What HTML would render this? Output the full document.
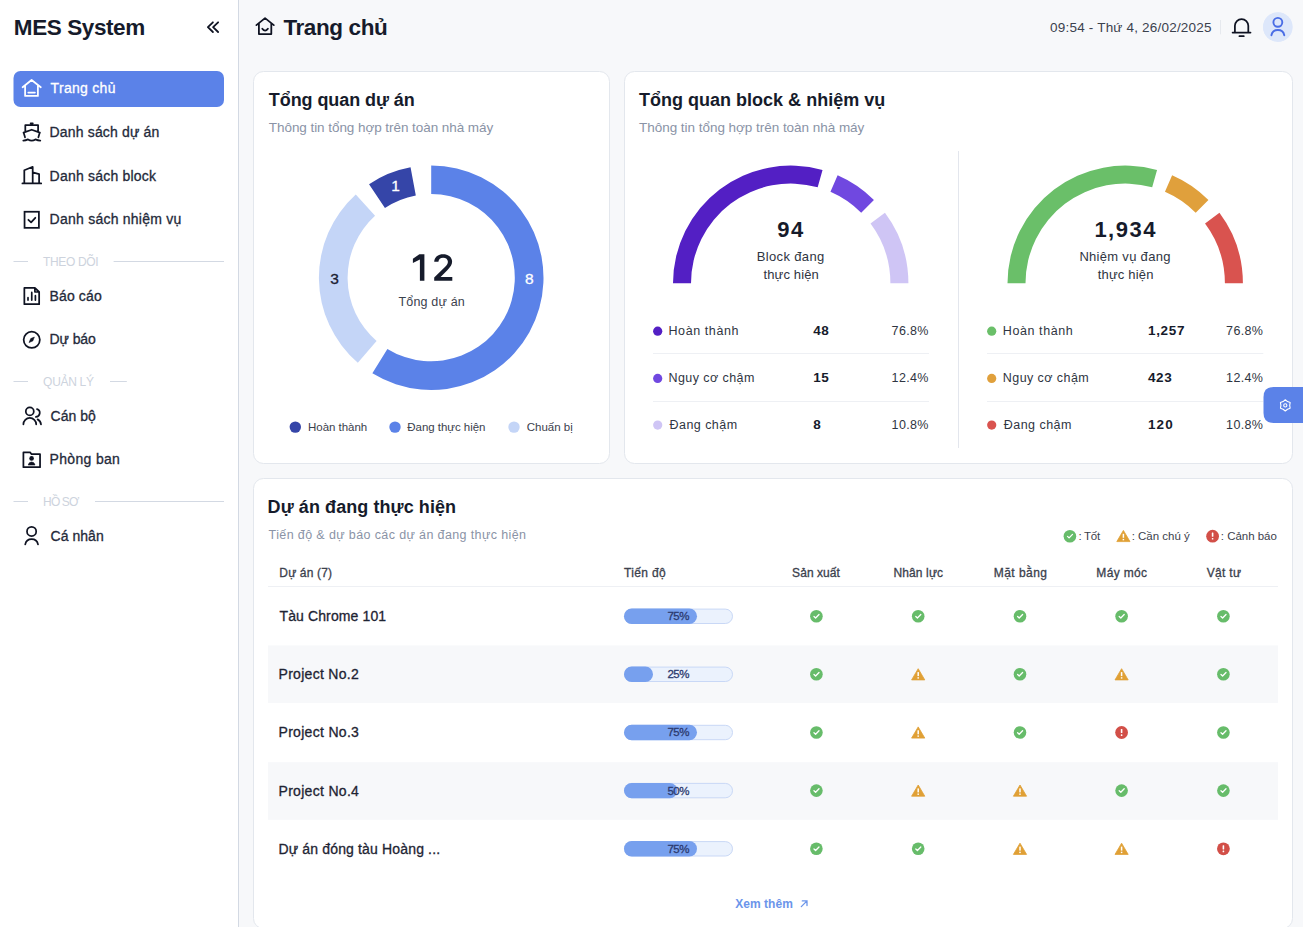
<!DOCTYPE html>
<html><head><meta charset="utf-8"><title>MES System</title>
<style>
html,body{margin:0;padding:0;}
body{width:1303px;height:927px;overflow:hidden;background:#f7f8fa;position:relative;font-family:"Liberation Sans",sans-serif;}
svg{position:absolute;left:0;top:0;}
.t{position:absolute;white-space:nowrap;}
</style></head><body>
<svg width="1303" height="927" viewBox="0 0 1303 927">
<rect x="0" y="0" width="238" height="927" fill="#ffffff"/>
<rect x="238" y="0" width="1" height="927" fill="#d3d9e3"/>
<rect x="13.5" y="71" width="210.5" height="36" rx="7" fill="#5b82e8"/>
<rect x="13.5" y="261.0" width="14.5" height="1" fill="#d3d9e3"/>
<rect x="113.6" y="261.0" width="110.4" height="1" fill="#d3d9e3"/>
<rect x="13.5" y="381.0" width="14.5" height="1" fill="#d3d9e3"/>
<rect x="110" y="381.0" width="16.799999999999997" height="1" fill="#d3d9e3"/>
<rect x="13.5" y="501.0" width="14.5" height="1" fill="#d3d9e3"/>
<rect x="95" y="501.0" width="129" height="1" fill="#d3d9e3"/>
<rect x="253.5" y="71.5" width="356" height="392" rx="10" fill="#ffffff" stroke="#e3e7ed" stroke-width="1"/>
<rect x="624.5" y="71.5" width="668" height="392" rx="10" fill="#ffffff" stroke="#e3e7ed" stroke-width="1"/>
<rect x="253.5" y="478.5" width="1039" height="450" rx="10" fill="#ffffff" stroke="#e3e7ed" stroke-width="1"/>
<path d="M431.20,165.40 A112.3,112.3 0 1 1 372.36,373.35 L387.39,348.90 A83.6,83.6 0 1 0 431.20,194.10 Z" fill="#5b82e8"/>
<path d="M357.82,362.71 A112.3,112.3 0 0 1 355.77,194.51 L375.04,215.77 A83.6,83.6 0 0 0 376.57,340.98 Z" fill="#c4d5f7"/>
<path d="M369.05,184.16 A112.3,112.3 0 0 1 410.54,167.32 L415.82,195.53 A83.6,83.6 0 0 0 384.94,208.07 Z" fill="#3545a8"/>
<path d="M673.00,283.30 A117.7,117.7 0 0 1 822.55,169.99 L817.68,187.32 A99.7,99.7 0 0 0 691.00,283.30 Z" fill="#531fc4"/>
<path d="M837.63,175.36 A117.7,117.7 0 0 1 873.93,200.07 L861.20,212.80 A99.7,99.7 0 0 0 830.46,191.87 Z" fill="#7048e0"/>
<path d="M884.95,212.79 A117.7,117.7 0 0 1 908.40,283.30 L890.40,283.30 A99.7,99.7 0 0 0 870.53,223.58 Z" fill="#cfc5f5"/>
<path d="M1007.50,283.30 A117.7,117.7 0 0 1 1157.05,169.99 L1152.18,187.32 A99.7,99.7 0 0 0 1025.50,283.30 Z" fill="#6abf69"/>
<path d="M1172.13,175.36 A117.7,117.7 0 0 1 1208.43,200.07 L1195.70,212.80 A99.7,99.7 0 0 0 1164.96,191.87 Z" fill="#e0a03c"/>
<path d="M1219.45,212.79 A117.7,117.7 0 0 1 1242.90,283.30 L1224.90,283.30 A99.7,99.7 0 0 0 1205.03,223.58 Z" fill="#d9534f"/>
<circle cx="295.3" cy="427.1" r="5.7" fill="#3545a8"/>
<circle cx="395" cy="427.1" r="5.7" fill="#5b82e8"/>
<circle cx="514" cy="427.1" r="5.7" fill="#c4d5f7"/>
<circle cx="657.7" cy="331.2" r="4.6" fill="#531fc4"/>
<circle cx="991.7" cy="331.2" r="4.6" fill="#6abf69"/>
<circle cx="657.7" cy="378.4" r="4.6" fill="#7048e0"/>
<circle cx="991.7" cy="378.4" r="4.6" fill="#e0a03c"/>
<circle cx="657.7" cy="425.1" r="4.6" fill="#cfc5f5"/>
<circle cx="991.7" cy="425.1" r="4.6" fill="#d9534f"/>
<rect x="653" y="353.0" width="276" height="1" fill="#eef0f4"/>
<rect x="987" y="353.0" width="276.3" height="1" fill="#eef0f4"/>
<rect x="653" y="401.0" width="276" height="1" fill="#eef0f4"/>
<rect x="987" y="401.0" width="276.3" height="1" fill="#eef0f4"/>
<rect x="958" y="151" width="1" height="297" fill="#e3e6ed"/>
<rect x="268" y="586" width="1010" height="1" fill="#eef0f4"/>
<rect x="268" y="645.4" width="1010" height="57.7" fill="#f7f8fa"/>
<rect x="268" y="762.2" width="1010" height="57.6" fill="#f7f8fa"/>
<rect x="624.5" y="609.0999999999999" width="108" height="14.4" rx="7.2" fill="#ebf2fd" stroke="#c9d8f6" stroke-width="1"/>
<rect x="624" y="608.5999999999999" width="73" height="15.4" rx="7.7" fill="#77a0ee"/>
<rect x="624.5" y="667.0999999999999" width="108" height="14.4" rx="7.2" fill="#ebf2fd" stroke="#c9d8f6" stroke-width="1"/>
<rect x="624" y="666.5999999999999" width="29" height="15.4" rx="7.7" fill="#77a0ee"/>
<rect x="624.5" y="725.3" width="108" height="14.4" rx="7.2" fill="#ebf2fd" stroke="#c9d8f6" stroke-width="1"/>
<rect x="624" y="724.8" width="73" height="15.4" rx="7.7" fill="#77a0ee"/>
<rect x="624.5" y="783.4" width="108" height="14.4" rx="7.2" fill="#ebf2fd" stroke="#c9d8f6" stroke-width="1"/>
<rect x="624" y="782.9" width="53.4" height="15.4" rx="7.7" fill="#77a0ee"/>
<rect x="624.5" y="841.5999999999999" width="108" height="14.4" rx="7.2" fill="#ebf2fd" stroke="#c9d8f6" stroke-width="1"/>
<rect x="624" y="841.0999999999999" width="73" height="15.4" rx="7.7" fill="#77a0ee"/>
<circle cx="816.4" cy="616.3" r="6.3" fill="#67bc6a"/><path d="M814.0,616.5 L815.6,618.0 L819.0,614.5" fill="none" stroke="#fff" stroke-width="1.3" stroke-linecap="round" stroke-linejoin="round"/>
<circle cx="918.2" cy="616.3" r="6.3" fill="#67bc6a"/><path d="M915.8000000000001,616.5 L917.4000000000001,618.0 L920.8000000000001,614.5" fill="none" stroke="#fff" stroke-width="1.3" stroke-linecap="round" stroke-linejoin="round"/>
<circle cx="1020" cy="616.3" r="6.3" fill="#67bc6a"/><path d="M1017.6,616.5 L1019.2,618.0 L1022.6,614.5" fill="none" stroke="#fff" stroke-width="1.3" stroke-linecap="round" stroke-linejoin="round"/>
<circle cx="1121.6" cy="616.3" r="6.3" fill="#67bc6a"/><path d="M1119.1999999999998,616.5 L1120.8,618.0 L1124.1999999999998,614.5" fill="none" stroke="#fff" stroke-width="1.3" stroke-linecap="round" stroke-linejoin="round"/>
<circle cx="1223.4" cy="616.3" r="6.3" fill="#67bc6a"/><path d="M1221.0,616.5 L1222.6000000000001,618.0 L1226.0,614.5" fill="none" stroke="#fff" stroke-width="1.3" stroke-linecap="round" stroke-linejoin="round"/>
<circle cx="816.4" cy="674.3" r="6.3" fill="#67bc6a"/><path d="M814.0,674.5 L815.6,676.0 L819.0,672.5" fill="none" stroke="#fff" stroke-width="1.3" stroke-linecap="round" stroke-linejoin="round"/>
<path d="M918.2,668.6999999999999 L924.8000000000001,679.9 L911.6,679.9 Z" fill="#e0a035" stroke="#e0a035" stroke-width="0.8" stroke-linejoin="round"/><rect x="917.45" y="672.0999999999999" width="1.5" height="4" fill="#fff"/><rect x="917.45" y="677.1999999999999" width="1.5" height="1.4" fill="#fff"/>
<circle cx="1020" cy="674.3" r="6.3" fill="#67bc6a"/><path d="M1017.6,674.5 L1019.2,676.0 L1022.6,672.5" fill="none" stroke="#fff" stroke-width="1.3" stroke-linecap="round" stroke-linejoin="round"/>
<path d="M1121.6,668.6999999999999 L1128.1999999999998,679.9 L1115.0,679.9 Z" fill="#e0a035" stroke="#e0a035" stroke-width="0.8" stroke-linejoin="round"/><rect x="1120.85" y="672.0999999999999" width="1.5" height="4" fill="#fff"/><rect x="1120.85" y="677.1999999999999" width="1.5" height="1.4" fill="#fff"/>
<circle cx="1223.4" cy="674.3" r="6.3" fill="#67bc6a"/><path d="M1221.0,674.5 L1222.6000000000001,676.0 L1226.0,672.5" fill="none" stroke="#fff" stroke-width="1.3" stroke-linecap="round" stroke-linejoin="round"/>
<circle cx="816.4" cy="732.5" r="6.3" fill="#67bc6a"/><path d="M814.0,732.7 L815.6,734.2 L819.0,730.7" fill="none" stroke="#fff" stroke-width="1.3" stroke-linecap="round" stroke-linejoin="round"/>
<path d="M918.2,726.9 L924.8000000000001,738.1 L911.6,738.1 Z" fill="#e0a035" stroke="#e0a035" stroke-width="0.8" stroke-linejoin="round"/><rect x="917.45" y="730.3" width="1.5" height="4" fill="#fff"/><rect x="917.45" y="735.4" width="1.5" height="1.4" fill="#fff"/>
<circle cx="1020" cy="732.5" r="6.3" fill="#67bc6a"/><path d="M1017.6,732.7 L1019.2,734.2 L1022.6,730.7" fill="none" stroke="#fff" stroke-width="1.3" stroke-linecap="round" stroke-linejoin="round"/>
<circle cx="1121.6" cy="732.5" r="6.4" fill="#d24f48"/><rect x="1120.8" y="728.9" width="1.6" height="4.2" rx="0.5" fill="#fff"/><rect x="1120.8" y="734.3" width="1.6" height="1.6" rx="0.5" fill="#fff"/>
<circle cx="1223.4" cy="732.5" r="6.3" fill="#67bc6a"/><path d="M1221.0,732.7 L1222.6000000000001,734.2 L1226.0,730.7" fill="none" stroke="#fff" stroke-width="1.3" stroke-linecap="round" stroke-linejoin="round"/>
<circle cx="816.4" cy="790.6" r="6.3" fill="#67bc6a"/><path d="M814.0,790.8000000000001 L815.6,792.3000000000001 L819.0,788.8000000000001" fill="none" stroke="#fff" stroke-width="1.3" stroke-linecap="round" stroke-linejoin="round"/>
<path d="M918.2,785.0 L924.8000000000001,796.2 L911.6,796.2 Z" fill="#e0a035" stroke="#e0a035" stroke-width="0.8" stroke-linejoin="round"/><rect x="917.45" y="788.4" width="1.5" height="4" fill="#fff"/><rect x="917.45" y="793.5" width="1.5" height="1.4" fill="#fff"/>
<path d="M1020,785.0 L1026.6,796.2 L1013.4,796.2 Z" fill="#e0a035" stroke="#e0a035" stroke-width="0.8" stroke-linejoin="round"/><rect x="1019.25" y="788.4" width="1.5" height="4" fill="#fff"/><rect x="1019.25" y="793.5" width="1.5" height="1.4" fill="#fff"/>
<circle cx="1121.6" cy="790.6" r="6.3" fill="#67bc6a"/><path d="M1119.1999999999998,790.8000000000001 L1120.8,792.3000000000001 L1124.1999999999998,788.8000000000001" fill="none" stroke="#fff" stroke-width="1.3" stroke-linecap="round" stroke-linejoin="round"/>
<circle cx="1223.4" cy="790.6" r="6.3" fill="#67bc6a"/><path d="M1221.0,790.8000000000001 L1222.6000000000001,792.3000000000001 L1226.0,788.8000000000001" fill="none" stroke="#fff" stroke-width="1.3" stroke-linecap="round" stroke-linejoin="round"/>
<circle cx="816.4" cy="848.8" r="6.3" fill="#67bc6a"/><path d="M814.0,849.0 L815.6,850.5 L819.0,847.0" fill="none" stroke="#fff" stroke-width="1.3" stroke-linecap="round" stroke-linejoin="round"/>
<circle cx="918.2" cy="848.8" r="6.3" fill="#67bc6a"/><path d="M915.8000000000001,849.0 L917.4000000000001,850.5 L920.8000000000001,847.0" fill="none" stroke="#fff" stroke-width="1.3" stroke-linecap="round" stroke-linejoin="round"/>
<path d="M1020,843.1999999999999 L1026.6,854.4 L1013.4,854.4 Z" fill="#e0a035" stroke="#e0a035" stroke-width="0.8" stroke-linejoin="round"/><rect x="1019.25" y="846.5999999999999" width="1.5" height="4" fill="#fff"/><rect x="1019.25" y="851.6999999999999" width="1.5" height="1.4" fill="#fff"/>
<path d="M1121.6,843.1999999999999 L1128.1999999999998,854.4 L1115.0,854.4 Z" fill="#e0a035" stroke="#e0a035" stroke-width="0.8" stroke-linejoin="round"/><rect x="1120.85" y="846.5999999999999" width="1.5" height="4" fill="#fff"/><rect x="1120.85" y="851.6999999999999" width="1.5" height="1.4" fill="#fff"/>
<circle cx="1223.4" cy="848.8" r="6.4" fill="#d24f48"/><rect x="1222.6000000000001" y="845.1999999999999" width="1.6" height="4.2" rx="0.5" fill="#fff"/><rect x="1222.6000000000001" y="850.5999999999999" width="1.6" height="1.6" rx="0.5" fill="#fff"/>
<circle cx="1069.9" cy="536.2" r="6.3" fill="#67bc6a"/><path d="M1067.5,536.4000000000001 L1069.1000000000001,537.9000000000001 L1072.5,534.4000000000001" fill="none" stroke="#fff" stroke-width="1.3" stroke-linecap="round" stroke-linejoin="round"/>
<path d="M1123.4,530.4 L1130.0,541.6 L1116.8000000000002,541.6 Z" fill="#e0a035" stroke="#e0a035" stroke-width="0.8" stroke-linejoin="round"/><rect x="1122.65" y="533.8" width="1.5" height="4" fill="#fff"/><rect x="1122.65" y="538.9" width="1.5" height="1.4" fill="#fff"/>
<circle cx="1212.6" cy="536.2" r="6.4" fill="#d24f48"/><rect x="1211.8" y="532.6" width="1.6" height="4.2" rx="0.5" fill="#fff"/><rect x="1211.8" y="538.0" width="1.6" height="1.6" rx="0.5" fill="#fff"/>
<path d="M1303,387 L1273.5,387 Q1263.5,387 1263.5,397 L1263.5,413 Q1263.5,423 1273.5,423 L1303,423 Z" fill="#5b82e8"/>
<polygon points="1285.30,399.80 1287.50,401.59 1290.15,402.60 1289.70,405.40 1290.15,408.20 1287.50,409.21 1285.30,411.00 1283.10,409.21 1280.45,408.20 1280.90,405.40 1280.45,402.60 1283.10,401.59" fill="none" stroke="#fff" stroke-width="1.1" stroke-linejoin="round"/>
<circle cx="1285.3" cy="405.4" r="1.6" fill="none" stroke="#fff" stroke-width="1.1"/>
<circle cx="1277.7" cy="27.1" r="14.6" fill="#dde6fb"/>
<circle cx="1277.7" cy="22.8" r="3.6" fill="none" stroke="#4a6fe0" stroke-width="1.6"/>
<path d="M1270.4,35.2 Q1271.2,28.6 1277.7,28.6 Q1284.2,28.6 1285,35.2" fill="none" stroke="#4a6fe0" stroke-width="1.6" stroke-linecap="round"/>
<rect x="1220" y="20" width="1" height="14.3" fill="#e6e9ee"/>
<path d="M1232.6,32.6 L1250.5,32.6 M1234.9,32.6 L1234.9,25.8 A6.7,6.7 0 0 1 1248.3,25.8 L1248.3,32.6" fill="none" stroke="#0f1322" stroke-width="1.75" stroke-linecap="round" stroke-linejoin="round" />
<path d="M1239.4,36.2 L1243.8,36.2" fill="none" stroke="#0f1322" stroke-width="1.7" stroke-linecap="round" stroke-linejoin="round" stroke-linecap="butt"/>
<circle cx="1277.85" cy="27.05" r="14.75" fill="#dde7fa"/>
<circle cx="1277.85" cy="22.36" r="4.45" fill="none" stroke="#4a6de5" stroke-width="1.9"/>
<path d="M1271.4,35.2 A6.6,6.6 0 0 1 1284.3,35.2" fill="none" stroke="#4a6de5" stroke-width="1.9" stroke-linecap="round" stroke-linejoin="round" />
<path d="M212.9,22.3 L207.9,27.15 L212.9,32 M218.1,22.3 L213.1,27.15 L218.1,32" fill="none" stroke="#0f1322" stroke-width="1.8" stroke-linecap="round" stroke-linejoin="round" stroke-linecap="square"/>
<path d="M256.4,25.1 L265.05,18.1 L273.8,25.1 M258.9,23.3 L258.9,34.1 L271.3,34.1 L271.3,23.3 M262.3,28.7 Q265.1,32.4 267.9,28.7" fill="none" stroke="#0f1322" stroke-width="1.8" stroke-linecap="round" stroke-linejoin="round" />
<path d="M22.6,87.2 L31.6,80.0 L40.8,87.2 M25.1,85.5 L25.1,95.9 L37.9,95.9 L37.9,85.5 M28.3,92.6 L34.9,92.6" fill="none" stroke="#ffffff" stroke-width="1.75" stroke-linecap="round" stroke-linejoin="round" />
<path d="M30.6,123.3 L32.8,123.3 M25.3,131.3 L25.3,125.0 L38.1,125.0 L38.1,131.3 M23.5,132.6 L31.7,129.7 L39.9,132.6 M23.7,132.8 L25.0,137.3 M39.7,132.8 L38.4,137.3 M23.3,140.6 Q25.6,140.6 28.0,139.4 Q31.7,141.9 35.4,139.4 Q37.9,140.6 40.3,140.6" fill="none" stroke="#0f1322" stroke-width="1.75" stroke-linecap="round" stroke-linejoin="round" />
<path d="M22.4,183.45 L41.2,183.45 M24.3,183.45 L24.3,170.2 L32.7,166.8 L32.7,183.45 M32.7,172.3 L39.1,174.1 L39.1,183.45" fill="none" stroke="#0f1322" stroke-width="1.75" stroke-linecap="round" stroke-linejoin="round" />
<rect x="24.55" y="211.75" width="14.35" height="16.1" fill="none" stroke="#0f1322" stroke-width="1.75"/>
<path d="M28.4,219.8 L31.1,222.3 L35.3,217.8" fill="none" stroke="#0f1322" stroke-width="1.75" stroke-linecap="round" stroke-linejoin="round" />
<path d="M24.35,287.9 L34.9,287.9 L39.15,292.0 L39.15,304.2 L24.35,304.2 Z M34.9,287.9 L34.9,291.8 L39.15,292.0" fill="none" stroke="#0f1322" stroke-width="1.75" stroke-linecap="round" stroke-linejoin="round" />
<path d="M28.0,297.7 L28.0,300.1 M31.75,292.4 L31.75,300.1 M35.4,295.7 L35.4,300.1" fill="none" stroke="#0f1322" stroke-width="1.7" stroke-linecap="round" stroke-linejoin="round" />
<circle cx="31.75" cy="339.8" r="8.1" fill="none" stroke="#0f1322" stroke-width="1.75"/>
<path d="M34.4,337.0 L32.8,341.0 L29.0,342.6 L30.7,338.6 Z" fill="#0f1322" stroke="#0f1322" stroke-width="0.5" stroke-linejoin="round"/>
<circle cx="29.8" cy="411.4" r="4.0" fill="none" stroke="#0f1322" stroke-width="1.75"/>
<path d="M23.4,424.3 A6.4,6.4 0 0 1 36.2,424.3 M37.0,409.1 A4.0,4.0 0 0 1 35.9,416.9 M37.6,419.4 A6.4,6.4 0 0 1 41.0,424.3" fill="none" stroke="#0f1322" stroke-width="1.75" stroke-linecap="round" stroke-linejoin="round" />
<path d="M23.4,452.4 L30.1,452.4 L31.6,454.2 L40.05,454.2 L40.05,467.2 L23.4,467.2 Z" fill="none" stroke="#0f1322" stroke-width="1.75" stroke-linecap="round" stroke-linejoin="round" />
<circle cx="31.6" cy="458.4" r="2.3" fill="#0f1322"/>
<path d="M28.2,465.0 Q28.9,462.0 31.6,462.0 Q34.3,462.0 35.0,465.0 Z" fill="#0f1322" stroke="#0f1322" stroke-width="0.6" stroke-linejoin="round"/>
<circle cx="31.6" cy="531.4" r="4.6" fill="none" stroke="#0f1322" stroke-width="1.75"/>
<path d="M25.25,544.3 A6.5,6.5 0 0 1 38.0,544.3" fill="none" stroke="#0f1322" stroke-width="1.75" stroke-linecap="round" stroke-linejoin="round" />
<path d="M412.9,258.7 L419.4,254.15 L424.4,254.15 L424.4,280.8 L419.9,280.8 L419.9,259.6 L412.9,263.0 Z" fill="#161b2b"/>
<path d="M434.2,280.8 L452.3,280.8 L452.3,276.9 L440.6,276.9 L447.3,270.2 C450.6,267.0 452.1,264.6 452.1,261.6 C452.1,257.1 448.3,254.15 443.1,254.15 C437.9,254.15 434.4,257.2 434.2,261.8 L438.4,261.8 C438.6,259.3 440.4,257.7 443.1,257.7 C445.9,257.7 447.9,259.3 447.9,261.8 C447.9,263.6 447.0,265.0 445.2,266.8 L434.2,277.6 Z" fill="#161b2b"/>
<path d="M801.3,906.6 L807,900.9 M802.3,900.9 L807,900.9 L807,905.6" fill="none" stroke="#6b95ea" stroke-width="1.3" stroke-linecap="round"/>
</svg>
<div class="t" id="t0" style="top:17.00px;font-size:22.5px;line-height:22.5px;font-weight:700;color:#161b2b;letter-spacing:-0.405px;left:13.80px;">MES System</div>
<div class="t" id="t1" style="top:81.00px;font-size:14px;line-height:14px;font-weight:400;color:#ffffff;-webkit-text-stroke:0.3px #ffffff;letter-spacing:0.296px;left:50.60px;">Trang chủ</div>
<div class="t" id="t2" style="top:125.00px;font-size:14px;line-height:14px;font-weight:400;color:#242a3a;-webkit-text-stroke:0.3px #242a3a;letter-spacing:0.160px;left:49.60px;">Danh sách dự án</div>
<div class="t" id="t3" style="top:169.00px;font-size:14px;line-height:14px;font-weight:400;color:#242a3a;-webkit-text-stroke:0.3px #242a3a;letter-spacing:0.207px;left:49.60px;">Danh sách block</div>
<div class="t" id="t4" style="top:212.00px;font-size:14px;line-height:14px;font-weight:400;color:#242a3a;-webkit-text-stroke:0.3px #242a3a;letter-spacing:0.239px;left:49.60px;">Danh sách nhiệm vụ</div>
<div class="t" id="t5" style="top:289.00px;font-size:14px;line-height:14px;font-weight:400;color:#242a3a;-webkit-text-stroke:0.3px #242a3a;letter-spacing:0.119px;left:49.60px;">Báo cáo</div>
<div class="t" id="t6" style="top:332.00px;font-size:14px;line-height:14px;font-weight:400;color:#242a3a;-webkit-text-stroke:0.3px #242a3a;letter-spacing:-0.109px;left:49.60px;">Dự báo</div>
<div class="t" id="t7" style="top:409.00px;font-size:14px;line-height:14px;font-weight:400;color:#242a3a;-webkit-text-stroke:0.3px #242a3a;letter-spacing:0.008px;left:50.60px;">Cán bộ</div>
<div class="t" id="t8" style="top:452.00px;font-size:14px;line-height:14px;font-weight:400;color:#242a3a;-webkit-text-stroke:0.3px #242a3a;letter-spacing:0.319px;left:49.60px;">Phòng ban</div>
<div class="t" id="t9" style="top:529.00px;font-size:14px;line-height:14px;font-weight:400;color:#242a3a;-webkit-text-stroke:0.3px #242a3a;letter-spacing:0.026px;left:50.60px;">Cá nhân</div>
<div class="t" id="t10" style="top:256.00px;font-size:12px;line-height:12px;font-weight:400;color:#cdd3dd;letter-spacing:-0.367px;left:43.10px;">THEO DÕI</div>
<div class="t" id="t11" style="top:376.00px;font-size:12px;line-height:12px;font-weight:400;color:#cdd3dd;letter-spacing:-0.296px;left:43.10px;">QUẢN LÝ</div>
<div class="t" id="t12" style="top:496.00px;font-size:12px;line-height:12px;font-weight:400;color:#cdd3dd;letter-spacing:-0.859px;left:43.10px;">HỒ SƠ</div>
<div class="t" id="t13" style="top:17.00px;font-size:22.5px;line-height:22.5px;font-weight:700;color:#161b2b;letter-spacing:-0.396px;left:283.40px;">Trang chủ</div>
<div class="t" id="t14" style="top:21.00px;font-size:13.5px;line-height:13.5px;font-weight:400;color:#3b414d;letter-spacing:0.196px;left:1050.10px;">09:54 - Thứ 4, 26/02/2025</div>
<div class="t" id="t15" style="top:91.00px;font-size:18px;line-height:18px;font-weight:700;color:#161b2b;letter-spacing:-0.073px;left:268.80px;">Tổng quan dự án</div>
<div class="t" id="t16" style="top:121.00px;font-size:13.5px;line-height:13.5px;font-weight:400;color:#8a93a6;letter-spacing:-0.059px;left:268.80px;">Thông tin tổng hợp trên toàn nhà máy</div>
<div class="t" id="t17" style="top:296.00px;font-size:12.5px;line-height:12.5px;font-weight:400;color:#3b414d;letter-spacing:0.177px;left:398.50px;">Tổng dự án</div>
<div class="t" id="t18" style="top:422.00px;font-size:11.5px;line-height:11.5px;font-weight:400;color:#3b414d;letter-spacing:-0.041px;left:308.10px;">Hoàn thành</div>
<div class="t" id="t19" style="top:422.00px;font-size:11.5px;line-height:11.5px;font-weight:400;color:#3b414d;letter-spacing:-0.036px;left:407.30px;">Đang thực hiện</div>
<div class="t" id="t20" style="top:422.00px;font-size:11.5px;line-height:11.5px;font-weight:400;color:#3b414d;letter-spacing:0.003px;left:526.70px;">Chuấn bị</div>
<div class="t" id="t21" style="top:91.00px;font-size:18px;line-height:18px;font-weight:700;color:#161b2b;letter-spacing:0.008px;left:639.00px;">Tổng quan block &amp; nhiệm vụ</div>
<div class="t" id="t22" style="top:121.00px;font-size:13.5px;line-height:13.5px;font-weight:400;color:#8a93a6;letter-spacing:-0.033px;left:639.00px;">Thông tin tổng hợp trên toàn nhà máy</div>
<div class="t" id="t23" style="top:219.00px;font-size:22px;line-height:22px;font-weight:700;color:#161b2b;letter-spacing:1.565px;left:777.20px;">94</div>
<div class="t" id="t24" style="top:250.00px;font-size:13px;line-height:13px;font-weight:400;color:#2f3542;letter-spacing:0.345px;left:756.80px;">Block đang</div>
<div class="t" id="t25" style="top:268.00px;font-size:13px;line-height:13px;font-weight:400;color:#2f3542;letter-spacing:0.149px;left:763.40px;">thực hiện</div>
<div class="t" id="t26" style="top:219.00px;font-size:22px;line-height:22px;font-weight:700;color:#161b2b;letter-spacing:1.495px;left:1094.40px;">1,934</div>
<div class="t" id="t27" style="top:250.00px;font-size:13px;line-height:13px;font-weight:400;color:#2f3542;letter-spacing:0.299px;left:1079.40px;">Nhiệm vụ đang</div>
<div class="t" id="t28" style="top:268.00px;font-size:13px;line-height:13px;font-weight:400;color:#2f3542;letter-spacing:0.174px;left:1097.80px;">thực hiện</div>
<div class="t" id="t29" style="top:325.00px;font-size:12.5px;line-height:12.5px;font-weight:400;color:#2f3542;letter-spacing:0.591px;left:668.50px;">Hoàn thành</div>
<div class="t" id="t30" style="top:324.00px;font-size:13.5px;line-height:13.5px;font-weight:700;color:#161b2b;letter-spacing:0.492px;left:813.30px;">48</div>
<div class="t" id="t31" style="top:325.00px;font-size:12.5px;line-height:12.5px;font-weight:400;color:#2f3542;letter-spacing:0.343px;left:891.60px;">76.8%</div>
<div class="t" id="t32" style="top:325.00px;font-size:12.5px;line-height:12.5px;font-weight:400;color:#2f3542;letter-spacing:0.591px;left:1002.80px;">Hoàn thành</div>
<div class="t" id="t33" style="top:324.00px;font-size:13.5px;line-height:13.5px;font-weight:700;color:#161b2b;letter-spacing:0.731px;left:1147.90px;">1,257</div>
<div class="t" id="t34" style="top:325.00px;font-size:12.5px;line-height:12.5px;font-weight:400;color:#2f3542;letter-spacing:0.343px;left:1226.10px;">76.8%</div>
<div class="t" id="t35" style="top:372.00px;font-size:12.5px;line-height:12.5px;font-weight:400;color:#2f3542;letter-spacing:0.434px;left:668.50px;">Nguy cơ chậm</div>
<div class="t" id="t36" style="top:371.00px;font-size:13.5px;line-height:13.5px;font-weight:700;color:#161b2b;letter-spacing:0.492px;left:813.30px;">15</div>
<div class="t" id="t37" style="top:372.00px;font-size:12.5px;line-height:12.5px;font-weight:400;color:#2f3542;letter-spacing:0.343px;left:891.60px;">12.4%</div>
<div class="t" id="t38" style="top:372.00px;font-size:12.5px;line-height:12.5px;font-weight:400;color:#2f3542;letter-spacing:0.434px;left:1002.80px;">Nguy cơ chậm</div>
<div class="t" id="t39" style="top:371.00px;font-size:13.5px;line-height:13.5px;font-weight:700;color:#161b2b;letter-spacing:0.692px;left:1147.90px;">423</div>
<div class="t" id="t40" style="top:372.00px;font-size:12.5px;line-height:12.5px;font-weight:400;color:#2f3542;letter-spacing:0.343px;left:1226.10px;">12.4%</div>
<div class="t" id="t41" style="top:419.00px;font-size:12.5px;line-height:12.5px;font-weight:400;color:#2f3542;letter-spacing:0.461px;left:669.50px;">Đang chậm</div>
<div class="t" id="t42" style="top:418.00px;font-size:13.5px;line-height:13.5px;font-weight:700;color:#161b2b;letter-spacing:-0.600px;left:813.30px;">8</div>
<div class="t" id="t43" style="top:419.00px;font-size:12.5px;line-height:12.5px;font-weight:400;color:#2f3542;letter-spacing:0.343px;left:891.60px;">10.8%</div>
<div class="t" id="t44" style="top:419.00px;font-size:12.5px;line-height:12.5px;font-weight:400;color:#2f3542;letter-spacing:0.461px;left:1003.80px;">Đang chậm</div>
<div class="t" id="t45" style="top:418.00px;font-size:13.5px;line-height:13.5px;font-weight:700;color:#161b2b;letter-spacing:1.192px;left:1147.90px;">120</div>
<div class="t" id="t46" style="top:419.00px;font-size:12.5px;line-height:12.5px;font-weight:400;color:#2f3542;letter-spacing:0.343px;left:1226.10px;">10.8%</div>
<div class="t" id="t47" style="top:498.00px;font-size:18px;line-height:18px;font-weight:700;color:#161b2b;letter-spacing:0.075px;left:267.60px;">Dự án đang thực hiện</div>
<div class="t" id="t48" style="top:529.00px;font-size:12.5px;line-height:12.5px;font-weight:400;color:#8a93a6;letter-spacing:0.380px;left:268.60px;">Tiến độ &amp; dự báo các dự án đang thực hiện</div>
<div class="t" id="t49" style="top:531.00px;font-size:11.5px;line-height:11.5px;font-weight:400;color:#3b414d;letter-spacing:-0.253px;left:1078.40px;">: Tốt</div>
<div class="t" id="t50" style="top:531.00px;font-size:11.5px;line-height:11.5px;font-weight:400;color:#3b414d;letter-spacing:-0.012px;left:1131.70px;">: Cần chú ý</div>
<div class="t" id="t51" style="top:531.00px;font-size:11.5px;line-height:11.5px;font-weight:400;color:#3b414d;letter-spacing:-0.019px;left:1220.80px;">: Cảnh báo</div>
<div class="t" id="t52" style="top:567.00px;font-size:12px;line-height:12px;font-weight:400;color:#3b414d;-webkit-text-stroke:0.3px #3b414d;letter-spacing:0.164px;left:279.30px;">Dự án (7)</div>
<div class="t" id="t53" style="top:567.00px;font-size:12px;line-height:12px;font-weight:400;color:#3b414d;-webkit-text-stroke:0.3px #3b414d;letter-spacing:0.332px;left:624.00px;">Tiến độ</div>
<div class="t" id="t54" style="top:567.00px;font-size:12px;line-height:12px;font-weight:400;color:#3b414d;-webkit-text-stroke:0.3px #3b414d;letter-spacing:0.052px;left:792.10px;">Sản xuất</div>
<div class="t" id="t55" style="top:567.00px;font-size:12px;line-height:12px;font-weight:400;color:#3b414d;-webkit-text-stroke:0.3px #3b414d;letter-spacing:0.140px;left:893.40px;">Nhân lực</div>
<div class="t" id="t56" style="top:567.00px;font-size:12px;line-height:12px;font-weight:400;color:#3b414d;-webkit-text-stroke:0.3px #3b414d;letter-spacing:0.449px;left:993.80px;">Mặt bằng</div>
<div class="t" id="t57" style="top:567.00px;font-size:12px;line-height:12px;font-weight:400;color:#3b414d;-webkit-text-stroke:0.3px #3b414d;letter-spacing:0.338px;left:1096.30px;">Máy móc</div>
<div class="t" id="t58" style="top:567.00px;font-size:12px;line-height:12px;font-weight:400;color:#3b414d;-webkit-text-stroke:0.3px #3b414d;letter-spacing:0.284px;left:1206.80px;">Vật tư</div>
<div class="t" id="t59" style="top:609.00px;font-size:14px;line-height:14px;font-weight:400;color:#1e2433;-webkit-text-stroke:0.3px #1e2433;letter-spacing:0.118px;left:279.50px;">Tàu Chrome 101</div>
<div class="t" id="t60" style="top:667.00px;font-size:14px;line-height:14px;font-weight:400;color:#1e2433;-webkit-text-stroke:0.3px #1e2433;letter-spacing:0.296px;left:278.50px;">Project No.2</div>
<div class="t" id="t61" style="top:725.00px;font-size:14px;line-height:14px;font-weight:400;color:#1e2433;-webkit-text-stroke:0.3px #1e2433;letter-spacing:0.305px;left:278.50px;">Project No.3</div>
<div class="t" id="t62" style="top:784.00px;font-size:14px;line-height:14px;font-weight:400;color:#1e2433;-webkit-text-stroke:0.3px #1e2433;letter-spacing:0.305px;left:278.50px;">Project No.4</div>
<div class="t" id="t63" style="top:842.00px;font-size:14px;line-height:14px;font-weight:400;color:#1e2433;-webkit-text-stroke:0.3px #1e2433;letter-spacing:0.155px;left:278.50px;">Dự án đóng tàu Hoàng ...</div>
<div class="t" id="t64" style="top:611.00px;font-size:11.5px;line-height:11.5px;font-weight:400;color:#2c3a6e;-webkit-text-stroke:0.3px #2c3a6e;letter-spacing:-0.446px;left:667.40px;">75%</div>
<div class="t" id="t65" style="top:669.00px;font-size:11.5px;line-height:11.5px;font-weight:400;color:#2c3a6e;-webkit-text-stroke:0.3px #2c3a6e;letter-spacing:-0.446px;left:667.40px;">25%</div>
<div class="t" id="t66" style="top:727.00px;font-size:11.5px;line-height:11.5px;font-weight:400;color:#2c3a6e;-webkit-text-stroke:0.3px #2c3a6e;letter-spacing:-0.446px;left:667.40px;">75%</div>
<div class="t" id="t67" style="top:786.00px;font-size:11.5px;line-height:11.5px;font-weight:400;color:#2c3a6e;-webkit-text-stroke:0.3px #2c3a6e;letter-spacing:-0.446px;left:667.40px;">50%</div>
<div class="t" id="t68" style="top:844.00px;font-size:11.5px;line-height:11.5px;font-weight:400;color:#2c3a6e;-webkit-text-stroke:0.3px #2c3a6e;letter-spacing:-0.446px;left:667.40px;">75%</div>
<div class="t" id="t69" style="top:898.00px;font-size:12px;line-height:12px;font-weight:700;color:#6b95ea;letter-spacing:0.045px;left:735.20px;">Xem thêm</div>
<div class="t" id="t70" style="top:271.00px;font-size:15.5px;line-height:15.5px;font-weight:400;color:#1b2030;-webkit-text-stroke:0.3px #1b2030;letter-spacing:0.550px;left:330.35px;">3</div>
<div class="t" id="t71" style="top:271.00px;font-size:15.5px;line-height:15.5px;font-weight:400;color:#ffffff;-webkit-text-stroke:0.3px #ffffff;letter-spacing:0.100px;left:524.90px;">8</div>
<div class="t" id="t72" style="top:178.00px;font-size:15.5px;line-height:15.5px;font-weight:400;color:#ffffff;-webkit-text-stroke:0.3px #ffffff;letter-spacing:-1.700px;left:391.20px;">1</div>

</body></html>
